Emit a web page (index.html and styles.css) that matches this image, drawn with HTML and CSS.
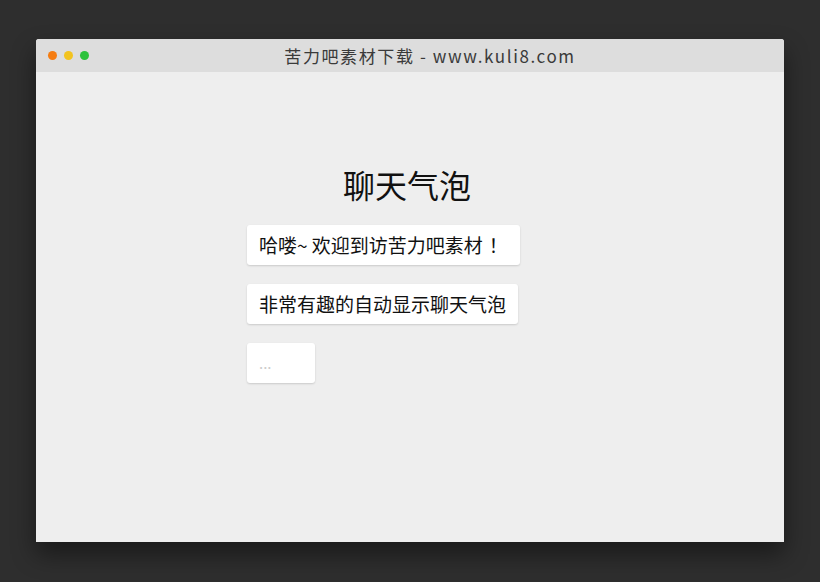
FILE: index.html
```html
<!DOCTYPE html>
<html lang="zh-CN">
<head>
    <meta charset="UTF-8">
    <title>聊天气泡</title>
    <link rel="stylesheet" href="styles.css">
</head>
<body>
    <div class="window">
        <div class="titlebar">
            <div class="dots">
                <span class="dot red"></span>
                <span class="dot yellow"></span>
                <span class="dot green"></span>
            </div>
            <div class="title">苦力吧素材下载 - www.kuli8.com</div>
        </div>
        <div class="content">
            <h1>聊天气泡</h1>
            <div class="chat">
                <div class="bubble">哈喽~ 欢迎到访苦力吧素材<span class="bang">！</span></div>
                <div class="bubble">非常有趣的自动显示聊天气泡</div>
                <div class="bubble typing">...</div>
            </div>
        </div>
    </div>
</body>
</html>
```

FILE: styles.css
```css
body {
    margin: 0;
    background-color: #2e2e2e;
    font-family: "Noto Sans CJK SC", "Noto Sans", sans-serif;
    padding: 39px 0 0 36px;
    height: 582px;
    box-sizing: border-box;
    overflow: hidden;
}

.window {
    width: 748px;
    height: 503px;
    background-color: #eeeeee;
    border-radius: 3px 3px 0 0;
    box-shadow: 0 12px 24px rgba(0, 0, 0, 0.45);
    overflow: hidden;
}

.titlebar {
    height: 33px;
    background-color: #dddddd;
    position: relative;
    display: flex;
    align-items: center;
    justify-content: center;
}

.dots {
    position: absolute;
    left: 12px;
    top: 12px;
    display: flex;
    gap: 7px;
}

.dot {
    width: 9px;
    height: 9px;
    border-radius: 50%;
}

.red { background-color: #f57d12; }
.yellow { background-color: #f2c31f; }
.green { background-color: #2cc23c; }

.title {
    font-size: 17px;
    color: #3a3a3a;
    margin-left: 40px;
    letter-spacing: 1.6px;
}

.content {
    padding-top: 88px;
}

h1 {
    margin: 0 0 17px -6px;
    font-size: 32px;
    font-weight: normal;
    line-height: 48px;
    text-align: center;
    color: #111;
}

.chat {
    margin-left: 211px;
    display: flex;
    flex-direction: column;
    align-items: flex-start;
    gap: 19px;
}

.bubble {
    background-color: #fff;
    border-radius: 3px;
    padding: 0 12px;
    height: 40px;
    line-height: 40px;
    font-size: 19px;
    color: #111;
    box-shadow: 0 1px 2px rgba(0, 0, 0, 0.15);
}

.bang {
    margin-left: 6px;
}

.typing {
    width: 44px;
    color: #ccc;
    font-size: 15px;
}
```
